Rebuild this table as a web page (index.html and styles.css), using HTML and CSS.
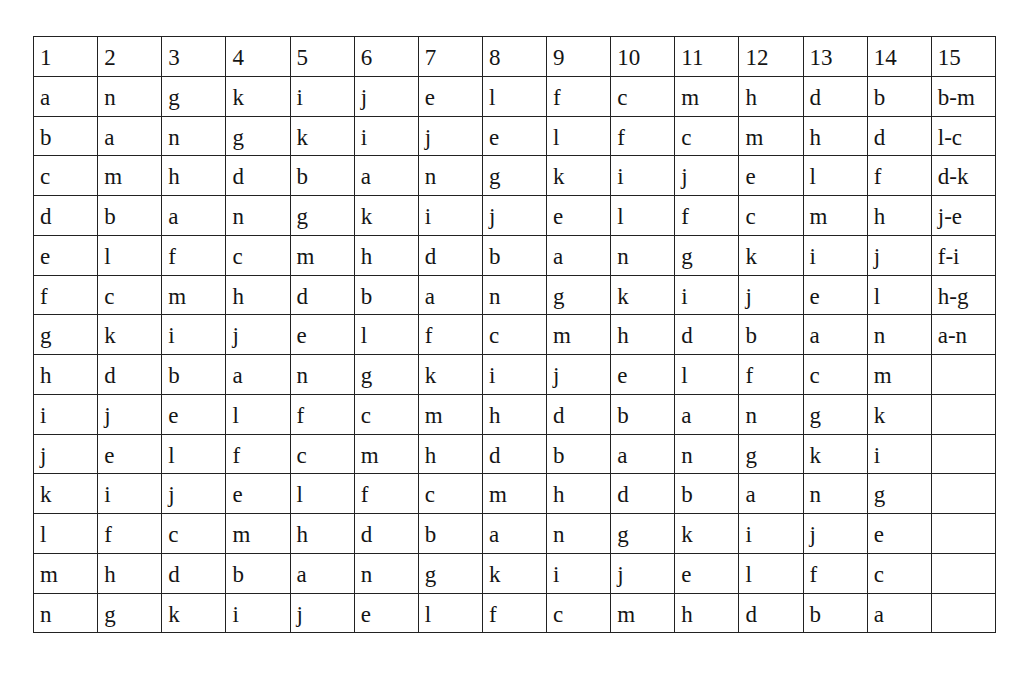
FILE: index.html
```html
<!DOCTYPE html>
<html>
<head>
<meta charset="utf-8">
<link rel="stylesheet" href="styles.css">
</head>
<body>
<table class="grid">
<tr><td>1</td><td>2</td><td>3</td><td>4</td><td>5</td><td>6</td><td>7</td><td>8</td><td>9</td><td>10</td><td>11</td><td>12</td><td>13</td><td>14</td><td>15</td></tr>
<tr><td>a</td><td>n</td><td>g</td><td>k</td><td>i</td><td>j</td><td>e</td><td>l</td><td>f</td><td>c</td><td>m</td><td>h</td><td>d</td><td>b</td><td>b-m</td></tr>
<tr><td>b</td><td>a</td><td>n</td><td>g</td><td>k</td><td>i</td><td>j</td><td>e</td><td>l</td><td>f</td><td>c</td><td>m</td><td>h</td><td>d</td><td>l-c</td></tr>
<tr><td>c</td><td>m</td><td>h</td><td>d</td><td>b</td><td>a</td><td>n</td><td>g</td><td>k</td><td>i</td><td>j</td><td>e</td><td>l</td><td>f</td><td>d-k</td></tr>
<tr><td>d</td><td>b</td><td>a</td><td>n</td><td>g</td><td>k</td><td>i</td><td>j</td><td>e</td><td>l</td><td>f</td><td>c</td><td>m</td><td>h</td><td>j-e</td></tr>
<tr><td>e</td><td>l</td><td>f</td><td>c</td><td>m</td><td>h</td><td>d</td><td>b</td><td>a</td><td>n</td><td>g</td><td>k</td><td>i</td><td>j</td><td>f-i</td></tr>
<tr><td>f</td><td>c</td><td>m</td><td>h</td><td>d</td><td>b</td><td>a</td><td>n</td><td>g</td><td>k</td><td>i</td><td>j</td><td>e</td><td>l</td><td>h-g</td></tr>
<tr><td>g</td><td>k</td><td>i</td><td>j</td><td>e</td><td>l</td><td>f</td><td>c</td><td>m</td><td>h</td><td>d</td><td>b</td><td>a</td><td>n</td><td>a-n</td></tr>
<tr><td>h</td><td>d</td><td>b</td><td>a</td><td>n</td><td>g</td><td>k</td><td>i</td><td>j</td><td>e</td><td>l</td><td>f</td><td>c</td><td>m</td><td></td></tr>
<tr><td>i</td><td>j</td><td>e</td><td>l</td><td>f</td><td>c</td><td>m</td><td>h</td><td>d</td><td>b</td><td>a</td><td>n</td><td>g</td><td>k</td><td></td></tr>
<tr><td>j</td><td>e</td><td>l</td><td>f</td><td>c</td><td>m</td><td>h</td><td>d</td><td>b</td><td>a</td><td>n</td><td>g</td><td>k</td><td>i</td><td></td></tr>
<tr><td>k</td><td>i</td><td>j</td><td>e</td><td>l</td><td>f</td><td>c</td><td>m</td><td>h</td><td>d</td><td>b</td><td>a</td><td>n</td><td>g</td><td></td></tr>
<tr><td>l</td><td>f</td><td>c</td><td>m</td><td>h</td><td>d</td><td>b</td><td>a</td><td>n</td><td>g</td><td>k</td><td>i</td><td>j</td><td>e</td><td></td></tr>
<tr><td>m</td><td>h</td><td>d</td><td>b</td><td>a</td><td>n</td><td>g</td><td>k</td><td>i</td><td>j</td><td>e</td><td>l</td><td>f</td><td>c</td><td></td></tr>
<tr><td>n</td><td>g</td><td>k</td><td>i</td><td>j</td><td>e</td><td>l</td><td>f</td><td>c</td><td>m</td><td>h</td><td>d</td><td>b</td><td>a</td><td></td></tr>
</table>
</body>
</html>
```

FILE: styles.css
```css
html, body {
  margin: 0;
  padding: 0;
  background: #fff;
}
body {
  padding: 36px 0 0 33px;
  font-family: "Liberation Serif", "Times New Roman", serif;
  color: #151515;
}
.grid {
  border-collapse: collapse;
  table-layout: fixed;
  width: 963px;
}
.grid td {
  border: 1.5px solid #222;
  width: 64px;
  height: 39.75px;
  padding: 9px 0 0 6px;
  box-sizing: border-box;
  font-size: 23px;
  line-height: 24px;
  vertical-align: top;
  text-align: left;
  white-space: nowrap;
}
```
